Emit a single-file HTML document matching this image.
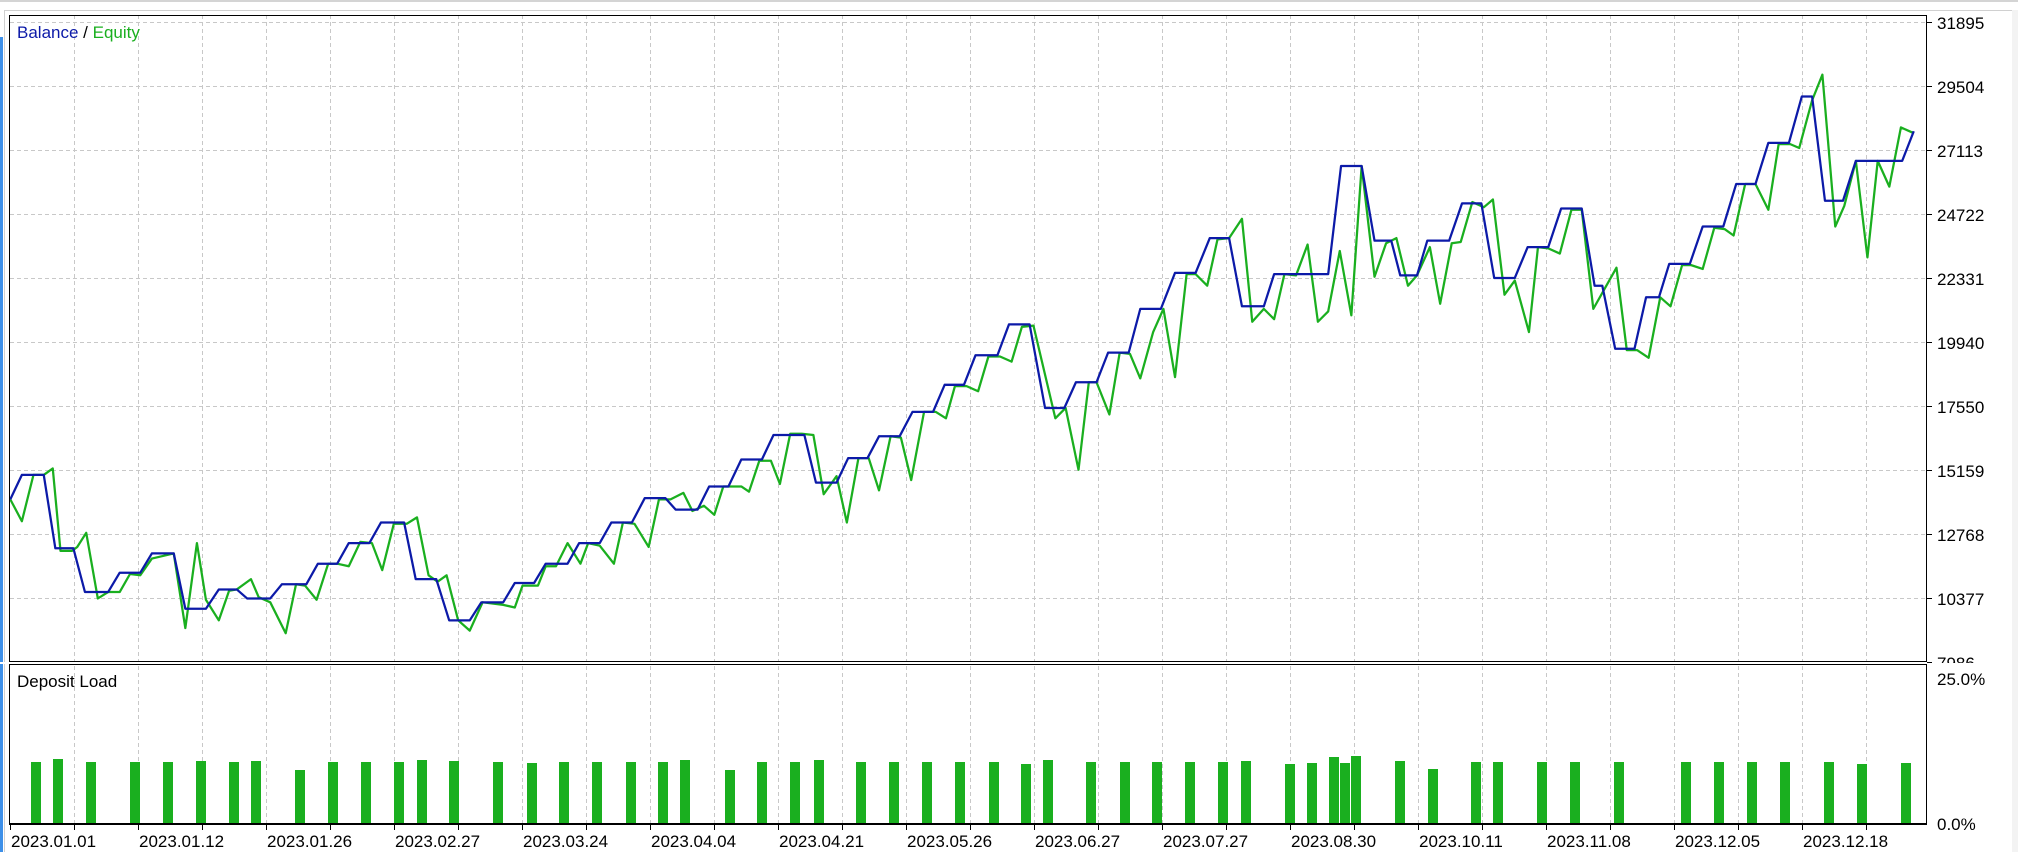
<!DOCTYPE html>
<html><head><meta charset="utf-8"><style>
html,body{margin:0;padding:0;background:#fff;width:2018px;height:852px;overflow:hidden}
svg{display:block}
text{font-family:"Liberation Sans","DejaVu Sans",sans-serif;font-size:17px;fill:#000}
</style></head><body>
<svg width="2018" height="852" viewBox="0 0 2018 852" xmlns="http://www.w3.org/2000/svg">
<rect x="0" y="0" width="2018" height="2" fill="#d4d4d4"/>
<rect x="4.5" y="10.5" width="2008" height="860" fill="none" stroke="#d0d0d0"/>
<rect x="2012" y="10" width="6" height="842" fill="#f3f3f3"/>
<rect x="0" y="37" width="3" height="815" fill="#3d8fe8"/>
<g stroke="#c8c8c8" stroke-width="1" stroke-dasharray="4,3" fill="none">
<path d="M74.5 15V823M138.5 15V823M202.5 15V823M266.5 15V823M330.5 15V823M394.5 15V823M458.5 15V823M522.5 15V823M586.5 15V823M650.5 15V823M714.5 15V823M778.5 15V823M842.5 15V823M906.5 15V823M970.5 15V823M1034.5 15V823M1098.5 15V823M1162.5 15V823M1226.5 15V823M1290.5 15V823M1354.5 15V823M1418.5 15V823M1482.5 15V823M1546.5 15V823M1610.5 15V823M1674.5 15V823M1738.5 15V823M1802.5 15V823M1866.5 15V823"/>
<path d="M10 22.5H1926M10 86.5H1926M10 150.5H1926M10 214.5H1926M10 278.5H1926M10 342.5H1926M10 406.5H1926M10 470.5H1926M10 534.5H1926M10 598.5H1926"/>
</g>
<rect x="0" y="662" width="1930" height="2" fill="#fff"/>
<g fill="#1aaf1f">
<rect x="31" y="762" width="10" height="61"/><rect x="53" y="759" width="10" height="64"/><rect x="86" y="762" width="10" height="61"/><rect x="130" y="762" width="10" height="61"/><rect x="163" y="762" width="10" height="61"/><rect x="196" y="761" width="10" height="62"/><rect x="229" y="762" width="10" height="61"/><rect x="251" y="761" width="10" height="62"/><rect x="295" y="770" width="10" height="53"/><rect x="328" y="762" width="10" height="61"/><rect x="361" y="762" width="10" height="61"/><rect x="394" y="762" width="10" height="61"/><rect x="417" y="760" width="10" height="63"/><rect x="449" y="761" width="10" height="62"/><rect x="493" y="762" width="10" height="61"/><rect x="527" y="763" width="10" height="60"/><rect x="559" y="762" width="10" height="61"/><rect x="592" y="762" width="10" height="61"/><rect x="626" y="762" width="10" height="61"/><rect x="658" y="762" width="10" height="61"/><rect x="680" y="760" width="10" height="63"/><rect x="725" y="770" width="10" height="53"/><rect x="757" y="762" width="10" height="61"/><rect x="790" y="762" width="10" height="61"/><rect x="814" y="760" width="10" height="63"/><rect x="856" y="762" width="10" height="61"/><rect x="889" y="762" width="10" height="61"/><rect x="922" y="762" width="10" height="61"/><rect x="955" y="762" width="10" height="61"/><rect x="989" y="762" width="10" height="61"/><rect x="1021" y="764" width="10" height="59"/><rect x="1043" y="760" width="10" height="63"/><rect x="1086" y="762" width="10" height="61"/><rect x="1120" y="762" width="10" height="61"/><rect x="1152" y="762" width="10" height="61"/><rect x="1185" y="762" width="10" height="61"/><rect x="1218" y="762" width="10" height="61"/><rect x="1241" y="761" width="10" height="62"/><rect x="1285" y="764" width="10" height="59"/><rect x="1307" y="763" width="10" height="60"/><rect x="1329" y="757" width="10" height="66"/><rect x="1340" y="763" width="10" height="60"/><rect x="1351" y="756" width="10" height="67"/><rect x="1395" y="761" width="10" height="62"/><rect x="1428" y="769" width="10" height="54"/><rect x="1471" y="762" width="10" height="61"/><rect x="1493" y="762" width="10" height="61"/><rect x="1537" y="762" width="10" height="61"/><rect x="1570" y="762" width="10" height="61"/><rect x="1614" y="762" width="10" height="61"/><rect x="1681" y="762" width="10" height="61"/><rect x="1714" y="762" width="10" height="61"/><rect x="1747" y="762" width="10" height="61"/><rect x="1780" y="762" width="10" height="61"/><rect x="1824" y="762" width="10" height="61"/><rect x="1857" y="764" width="10" height="59"/><rect x="1901" y="763" width="10" height="60"/>
</g>
<g transform="scale(1.287)" fill="none" stroke-linejoin="round">
<polyline stroke="#1aaf1f" stroke-width="1.75" points="8,388 17,405 26,369 34,369 41,364 47,428 56,428 60,425 67,414 76,465 84,460 93,460 101,446 109,447 118,434 135,430 144,488 153,422 160,466 170,482 178,459 184,458 195,450 201,464 210,468 222,492 230,454 237,455 246,466 255,438 262,438 271,440 280,421 289,422 297,443 306,407 316,407 324,402 333,447 340,452 347,447 356,482 365,490 375,468 391,470 400,472 406,455 418,455 424,440 432,440 441,422 451,438 457,422 466,424 477,438 484,406 493,407 504,425 512,388 521,388 531,383 538,397 547,393 555,400 562,378 576,378 582,382 590,358 599,358 606,376 614,337 623,337 632,338 640,384 650,370 658,406 667,356 675,356 683,381 692,339 700,340 708,373 718,320 727,320 735,325 742,300 751,300 760,304 768,277 777,277 786,281 794,254 803,253 820,325 828,317 838,365 846,297 852,297 862,322 870,274 878,275 886,294 896,258 904,240 913,293 922,213 929,213 938,222 946,186 955,185 965,170 973,250 982,240 990,248 998,213 1007,214 1016,190 1024,250 1032,242 1041,195 1050,245 1058,129 1068,215 1077,189 1085,185 1094,222 1101,214 1111,192 1119,236 1128,189 1135,188 1144,157 1153,161 1160,155 1169,229 1177,218 1188,258 1195,192 1203,193 1212,197 1221,163 1229,163 1238,240 1247,224 1256,208 1264,272 1272,272 1281,278 1290,231 1298,238 1307,206 1314,206 1323,209 1332,177 1340,178 1347,183 1356,143 1364,143 1374,163 1382,112 1391,112 1398,115 1408,78 1416,58 1426,176 1433,160 1442,125 1451,200 1459,125 1468,145 1477,99 1486,103"/>
<polyline stroke="#0c1aa8" stroke-width="1.75" points="8,388 17,369 34,369 43,426 57,426 66,460 84,460 93,445 109,445 118,430 135,430 144,473 160,473 170,458 184,458 192,465 210,465 219,454 238,454 247,438 262,438 271,422 287,422 296,406 314,406 323,450 339,450 349,482 365,482 374,468 391,468 400,453 415,453 424,438 441,438 450,422 466,422 475,406 491,406 501,387 517,387 525,396 542,396 551,378 566,378 576,357 592,357 601,338 625,338 634,375 650,375 659,356 674,356 683,339 699,339 709,320 725,320 734,299 749,299 758,276 775,276 784,252 800,252 812,317 827,317 836,297 852,297 861,274 877,274 886,240 902,240 913,212 929,212 940,185 955,185 965,238 982,238 990,213 1032,213 1042,129 1058,129 1068,187 1081,187 1088,214 1101,214 1109,187 1126,187 1136,158 1151,158 1161,216 1177,216 1187,192 1203,192 1213,162 1229,162 1239,222 1245,222 1255,271 1270,271 1279,231 1289,231 1297,205 1313,205 1323,176 1339,176 1349,143 1364,143 1374,111 1390,111 1400,75 1408,75 1418,156 1432,156 1442,125 1478,125 1487,102"/>
</g>
<rect x="9.5" y="15.5" width="1917" height="646" fill="none" stroke="#000"/>
<rect x="9.5" y="664.5" width="1917" height="159" fill="none" stroke="#000"/>
<rect x="9" y="823" width="1918" height="2" fill="#000"/>
<g stroke="#000" stroke-width="1">
<path d="M1927 22.5h5M1927 86.5h5M1927 150.5h5M1927 214.5h5M1927 278.5h5M1927 342.5h5M1927 406.5h5M1927 470.5h5M1927 534.5h5M1927 598.5h5M1927 662.5h5"/>
<path d="M10.5 825v5M74.5 825v5M138.5 825v5M202.5 825v5M266.5 825v5M330.5 825v5M394.5 825v5M458.5 825v5M522.5 825v5M586.5 825v5M650.5 825v5M714.5 825v5M778.5 825v5M842.5 825v5M906.5 825v5M970.5 825v5M1034.5 825v5M1098.5 825v5M1162.5 825v5M1226.5 825v5M1290.5 825v5M1354.5 825v5M1418.5 825v5M1482.5 825v5M1546.5 825v5M1610.5 825v5M1674.5 825v5M1738.5 825v5M1802.5 825v5M1866.5 825v5"/>
</g>
<text x="17" y="38"><tspan fill="#0c1aa8">Balance</tspan> / <tspan fill="#1aaf1f">Equity</tspan></text>
<text x="17" y="687">Deposit Load</text>
<defs><clipPath id="c1"><rect x="1930" y="650" width="80" height="13"/></clipPath></defs>
<g>
<text x="1937" y="29">31895</text><text x="1937" y="93">29504</text><text x="1937" y="157">27113</text><text x="1937" y="221">24722</text><text x="1937" y="285">22331</text><text x="1937" y="349">19940</text><text x="1937" y="413">17550</text><text x="1937" y="477">15159</text><text x="1937" y="541">12768</text><text x="1937" y="605">10377</text>
<text x="1937" y="669" clip-path="url(#c1)">7986</text>
<text x="1937" y="685">25.0%</text><text x="1937" y="830">0.0%</text>
</g>
<g>
<text x="11" y="847">2023.01.01</text><text x="139" y="847">2023.01.12</text><text x="267" y="847">2023.01.26</text><text x="395" y="847">2023.02.27</text><text x="523" y="847">2023.03.24</text><text x="651" y="847">2023.04.04</text><text x="779" y="847">2023.04.21</text><text x="907" y="847">2023.05.26</text><text x="1035" y="847">2023.06.27</text><text x="1163" y="847">2023.07.27</text><text x="1291" y="847">2023.08.30</text><text x="1419" y="847">2023.10.11</text><text x="1547" y="847">2023.11.08</text><text x="1675" y="847">2023.12.05</text><text x="1803" y="847">2023.12.18</text>
</g>
</svg>
</body></html>
